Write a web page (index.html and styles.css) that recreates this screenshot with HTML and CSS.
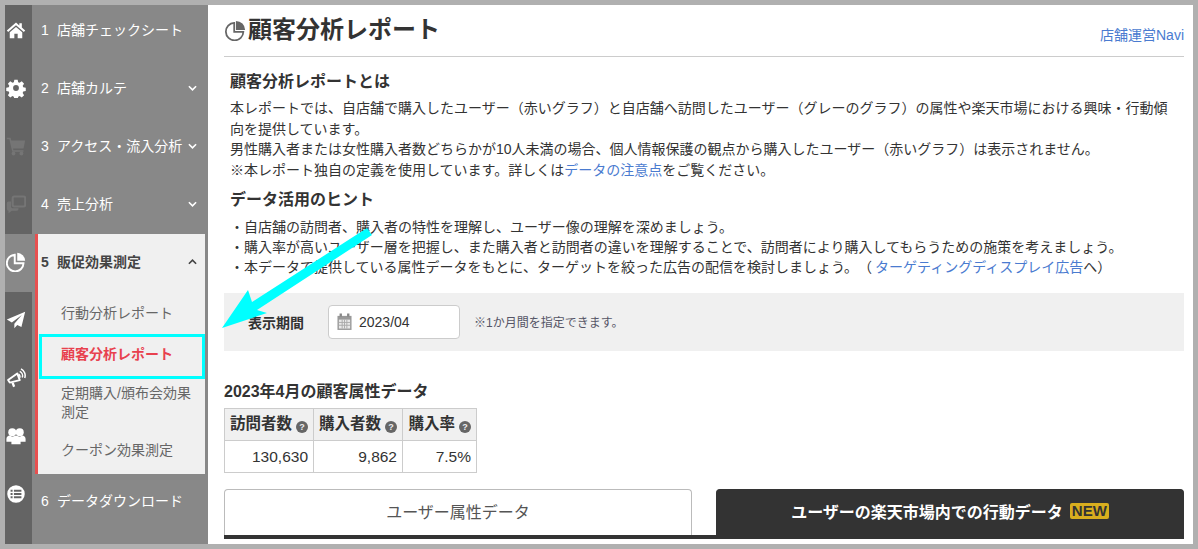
FILE: index.html
```html
<!DOCTYPE html>
<html lang="ja">
<head>
<meta charset="utf-8">
<title>顧客分析レポート</title>
<link rel="stylesheet" href="styles.css">
</head>
<body>
<div class="frame">
  <div class="rail">
    <div class="rail-cell first"><svg class="ico" viewBox="0 0 24 24"><path d="M12 3 1 12.500l1.600 1.900L12 6.400l9.400 8 1.600-1.900-4-3.400V4h-3v2.500z"/><path d="M12 8.400 4.500 14.800V22h5.500v-5.500h4V22h5.500v-7.200z"/></svg></div>
    <div class="rail-cell"><svg class="ico" viewBox="0 0 24 24"><path fill-rule="evenodd" d="M10 2h4l.6 3 1.700.7 2.600-1.700 2.800 2.800-1.700 2.600.7 1.700 3 .6v4l-3 .6-.7 1.700 1.700 2.600-2.800 2.800-2.600-1.700-1.700.7-.6 3h-4l-.6-3-1.700-.7-2.600 1.700-2.800-2.800 1.700-2.600-.7-1.700-3-.6v-4l3-.6.7-1.700-1.700-2.600 2.800-2.800 2.600 1.700 1.700-.7zM12 8.500a3.500 3.500 0 1 0 0 7 3.500 3.500 0 0 0 0-7z"/></svg></div>
    <div class="rail-cell dim"><svg class="ico" viewBox="0 0 24 24"><path d="M1 2h4.500l.8 3.500H23L21 15H8.500l.4 2H21v2H7.500L4 4H1z"/><circle cx="9" cy="21" r="2.300"/><circle cx="18.500" cy="21" r="2.300"/></svg></div>
    <div class="rail-cell dim"><svg class="ico" viewBox="0 0 24 24"><path d="M10 3h11a2 2 0 0 1 2 2v8a2 2 0 0 1-2 2H10a2 2 0 0 1-2-2V5a2 2 0 0 1 2-2z" fill="none" stroke="currentColor" stroke-width="2.500"/><path d="M3 9h3v6a2 2 0 0 0 2 2h7v1a2 2 0 0 1-2 2H7l-4 3v-3a2 2 0 0 1-2-2v-7a2 2 0 0 1 2-2z"/></svg></div>
    <div class="rail-cell active"><svg class="ico" viewBox="0 0 24 24"><path d="M10.500 3.300A10 10 0 1 0 21 13.500H10.500z" fill="none" stroke="currentColor" stroke-width="2.300"/><path d="M13.500 1A10 10 0 0 1 23 10.500h-9.500z"/></svg></div>
    <div class="rail-cell"><svg class="ico" viewBox="0 0 24 24"><path d="M23 2 1 11.500l6 3.500L19 6l-9 10.500V22l3.500-4 5 2.500z"/></svg></div>
    <div class="rail-cell"><svg class="ico" viewBox="0 0 24 24"><path d="M2.500 14.500 13.500 6.500 16.500 14.500 4.500 17.500z" fill="none" stroke="currentColor" stroke-width="2.300" stroke-linejoin="round"/><path d="M6.500 18l2 5 2.500-1-1.700-4.500z"/><path d="M15 7.500a3 3 0 0 1 1.500 4" fill="none" stroke="currentColor" stroke-width="1.800"/><path d="M16.500 4a6 6 0 0 1 3 7.500" fill="none" stroke="currentColor" stroke-width="1.800"/><path d="M18 1a9 9 0 0 1 4.500 11" fill="none" stroke="currentColor" stroke-width="1.800"/></svg></div>
    <div class="rail-cell"><svg class="ico" viewBox="0 0 24 24"><circle cx="7.500" cy="7.500" r="4.800"/><circle cx="16.500" cy="7.500" r="4.800"/><path d="M0.500 19v-3.500c0-2.500 2-4 4-4l3 1.500 4.500-1.500 4.500 1.500 3-1.500c2 0 4 1.500 4 4V19h-6v3H6.500v-3z"/></svg></div>
    <div class="rail-cell"><svg class="ico" viewBox="0 0 24 24"><path fill-rule="evenodd" d="M12 1.500a10.500 10.500 0 1 1 0 21 10.500 10.500 0 0 1 0-21zM5.500 7v2.200h2.400V7zm4 0v2.200h9V7zm-4 3.900v2.200h2.400v-2.200zm4 0v2.200h9v-2.200zm-4 3.900V17h2.400v-2.200zm4 0V17h9v-2.200z"/></svg></div>
  </div>

  <nav class="nav">
    <div class="nav-row first"><span class="num">1</span>店舗チェックシート</div>
    <div class="nav-row"><span class="num">2</span>店舗カルテ<svg class="chev" viewBox="0 0 10 6"><path d="M1 1l4 4 4-4"/></svg></div>
    <div class="nav-row"><span class="num">3</span>アクセス・流入分析<svg class="chev" viewBox="0 0 10 6"><path d="M1 1l4 4 4-4"/></svg></div>
    <div class="nav-row"><span class="num">4</span>売上分析<svg class="chev" viewBox="0 0 10 6"><path d="M1 1l4 4 4-4"/></svg></div>
    <div class="nav-open">
      <div class="nav-row open"><span class="num">5</span>販促効果測定<svg class="chev" viewBox="0 0 10 6"><path d="M1 5l4-4 4 4"/></svg></div>
      <ul class="sub">
        <li class="sub-item">行動分析レポート</li>
        <li class="sub-item current">顧客分析レポート</li>
        <li class="sub-item">定期購入/頒布会効果測定</li>
        <li class="sub-item">クーポン効果測定</li>
      </ul>
    </div>
    <div class="nav-row last"><span class="num">6</span>データダウンロード</div>
  </nav>

  <main class="main">
    <header class="title-bar">
      <h1 class="title"><svg class="title-ico" viewBox="0 0 24 24"><path d="M10.500 3.300A10 10 0 1 0 21 13.500H10.500z" fill="none" stroke="#666" stroke-width="2"/><path d="M12.500 1A10.500 10.500 0 0 1 23 11.500H12.500z" fill="#666"/></svg>顧客分析レポート</h1>
      <a class="navi">店舗運営Navi</a>
    </header>

    <section class="intro">
      <h2 class="h2">顧客分析レポートとは</h2>
      <p class="para">本レポートでは、自店舗で購入したユーザー（赤いグラフ）と自店舗へ訪問したユーザー（グレーのグラフ）の属性や楽天市場における興味・行動傾向を提供しています。<br>男性購入者または女性購入者数どちらかが10人未満の場合、個人情報保護の観点から購入したユーザー（赤いグラフ）は表示されません。<br>※本レポート独自の定義を使用しています。詳しくは<a class="link">データの注意点</a>をご覧ください。</p>
      <h2 class="h2 second">データ活用のヒント</h2>
      <ul class="hints">
        <li>・自店舗の訪問者、購入者の特性を理解し、ユーザー像の理解を深めましょう。</li>
        <li>・購入率が高いユーザー層を把握し、また購入者と訪問者の違いを理解することで、訪問者により購入してもらうための施策を考えましょう。</li>
        <li>・本データで提供している属性データをもとに、ターゲットを絞った広告の配信を検討しましょう。（<a class="link ad">ターゲティングディスプレイ広告</a>へ）</li>
      </ul>
    </section>

    <div class="filter">
      <span class="filter-label">表示期間</span>
      <div class="input"><svg class="cal" viewBox="0 0 16 18"><path d="M0.500 3h15v15H0.500z" fill="#999"/><path d="M4 0.500v3.500M12 0.500v3.500" stroke="#888" stroke-width="2.500"/><path d="M2 7h12v9.500H2z" fill="#e8e8e8"/><path d="M2 10h12M2 13h12M5.500 7v9.500M8 7v9.500M10.500 7v9.500" stroke="#aaa" stroke-width="1"/></svg>2023/04</div>
      <span class="note">※1か月間を指定できます。</span>
    </div>

    <h3 class="h3">2023年4月の顧客属性データ</h3>
    <table class="stats">
      <tr><th>訪問者数<i class="q">?</i></th><th>購入者数<i class="q">?</i></th><th class="narrow">購入率<i class="q">?</i></th></tr>
      <tr><td>130,630</td><td>9,862</td><td>7.5%</td></tr>
    </table>

    <div class="tabs">
      <div class="tab">ユーザー属性データ</div>
      <div class="tab on">ユーザーの楽天市場内での行動データ<span class="new">NEW</span></div>
    </div>
  </main>

  <svg class="arrow" viewBox="0 0 1198 549"><polygon points="367,228 372,235 257,310 267,313 222,328 248,290 252,302"/></svg>
</div>
</body>
</html>
```

FILE: styles.css
```css
* { box-sizing: border-box; }
html, body { margin: 0; padding: 0; }
body {
  width: 1198px;
  height: 549px;
  overflow: hidden;
  font-family: "Liberation Sans", "Noto Sans CJK JP", sans-serif;
  font-size: 14px;
  color: #333;
  background: #fff;
  text-spacing-trim: space-all;
}
.frame {
  position: relative;
  display: flex;
  width: 1198px;
  height: 549px;
  border: 5px solid #b0b0b0;
  overflow: hidden;
  background: #fff;
}
.rail {
  width: 27px;
  flex: none;
  background: #646464;
  display: flex;
  flex-direction: column;
}
.rail-cell {
  height: 58px;
  flex: none;
  display: flex;
  align-items: center;
  justify-content: center;
  padding-bottom: 2px;
  color: #fff;
}
.rail-cell.first { height: 55px; padding-bottom: 5px; }
.rail-cell.dim { color: #757575; }
.rail-cell.active { background: #888; }
.ico { width: 20px; height: 20px; fill: currentColor; margin-left: -5px; }

.nav {
  width: 176px;
  flex: none;
  background: #888;
  padding: 0 3px;
}
.nav-row {
  height: 58px;
  display: flex;
  align-items: center;
  color: #fff;
  padding-left: 6px;
  padding-bottom: 2px;
  line-height: 1;
  white-space: nowrap;
}
.nav-row.first { height: 55px; padding-bottom: 5px; }
.nav-row.last { height: 56px; }
.num { width: 16px; flex: none; }
.chev {
  width: 9px;
  height: 6px;
  margin-left: auto;
  margin-right: 8px;
  fill: none;
  stroke: #fff;
  stroke-width: 1.800;
}
.nav-open {
  background: #f0f0f0;
  border-left: 3px solid #e85050;
  height: 240px;
}
.nav-row.open { color: #444; font-weight: 700; padding-left: 3px; }
.nav-row.open .chev { stroke: #444; margin-right: 8px; }
.sub { list-style: none; margin: 0; padding: 12px 0 0; }
.sub-item {
  padding: 0 10px 0 23px;
  color: #666;
  line-height: 19px;
  margin-bottom: 19px;
}
.sub-item.current {
  position: relative;
  margin-top: 22px;
  margin-bottom: 20px;
  color: #e8414e;
  font-weight: 700;
}
.sub-item.current::after {
  content: "";
  position: absolute;
  left: 1px;
  right: 0;
  top: -11px;
  bottom: -15px;
  border: 3.500px solid #00ffff;
}

.main {
  flex: 1;
  min-width: 0;
  padding: 0 9px 0 16px;
}
.title-bar {
  height: 52px;
  border-bottom: 1px solid #ccc;
  display: flex;
  align-items: flex-start;
  justify-content: space-between;
}
.title {
  margin: 6px 0 0;
  font-size: 24px;
  line-height: 38px;
  font-weight: 700;
  color: #333;
  display: flex;
  align-items: center;
}
.title-ico { width: 21px; height: 21px; margin-left: 1px; margin-right: 2px; }
.navi { margin-top: 20px; font-size: 14px; line-height: 20px; color: #4a7bd0; }
.intro { padding-left: 6px; }
.h2 { margin: 14px 0 0; font-size: 16px; line-height: 22px; font-weight: 700; color: #333; }
.h2.second { margin-top: 8.600px; }
.para { margin: 5.400px 0 0; padding-right: 14px; line-height: 20.400px; color: #333; }
.link { color: #4a7bd0; }
.link.ad { margin-left: 3px; }
.hints { list-style: none; margin: 6px 0 0; padding: 0; line-height: 20px; }
.filter {
  margin-top: 16px;
  height: 58px;
  background: #f0f0f0;
  display: flex;
  align-items: center;
  padding-left: 24px;
}
.filter-label { font-weight: 700; width: 80px; }
.input {
  width: 132px;
  height: 34px;
  border: 1px solid #ccc;
  border-radius: 4px;
  background: #fff;
  display: flex;
  align-items: center;
  padding-left: 8px;
}
.cal { width: 15px; height: 17px; margin-right: 7px; }
.note { margin-left: 14px; font-size: 12px; color: #556; }
.h3 { margin: 30px 0 0; font-size: 16px; line-height: 22px; font-weight: 700; color: #333; }
.stats {
  margin-top: 5px;
  width: 252px;
  table-layout: fixed;
  border-collapse: collapse;
  border: 1px solid #ccc;
}
.stats th, .stats td {
  border: 1px solid #ccc;
  height: 32px;
  padding: 0 5px;
  text-align: right;
  white-space: nowrap;
}
.stats th { background: #f0f0f0; font-size: 15.500px; font-weight: 700; width: 89px; padding-bottom: 4px; }
.stats th.narrow { width: 74px; }
.stats td { font-size: 15.500px; padding-top: 1px; }
.q {
  display: inline-flex;
  align-items: center;
  justify-content: center;
  width: 12px;
  height: 12px;
  margin-left: 4px;
  border-radius: 50%;
  background: #666;
  color: #eee;
  font-size: 9px;
  font-style: normal;
  vertical-align: -1px;
}
.tabs {
  margin-top: 16px;
  display: flex;
  justify-content: space-between;
  border-bottom: 4px solid #333;
  height: 50px;
}
.tab {
  width: 468px;
  height: 46px;
  border: 1px solid #bbb;
  border-bottom: 0;
  border-radius: 4px 4px 0 0;
  display: flex;
  align-items: center;
  justify-content: center;
  font-size: 16px;
  color: #555;
  padding-bottom: 3px;
}
.tab.on {
  background: #333;
  border-color: #333;
  color: #fff;
  font-weight: 700;
  height: 50px;
  padding-bottom: 6px;
}
.new {
  margin-left: 7px;
  padding: 0 2px;
  border-radius: 2px;
  background: #d9ae1e;
  color: #333;
  font-size: 15px;
  line-height: 16px;
}
.arrow {
  position: absolute;
  left: -5px;
  top: -5px;
  width: 1198px;
  height: 549px;
  pointer-events: none;
}
.arrow polygon { fill: #00ffff; }
```
